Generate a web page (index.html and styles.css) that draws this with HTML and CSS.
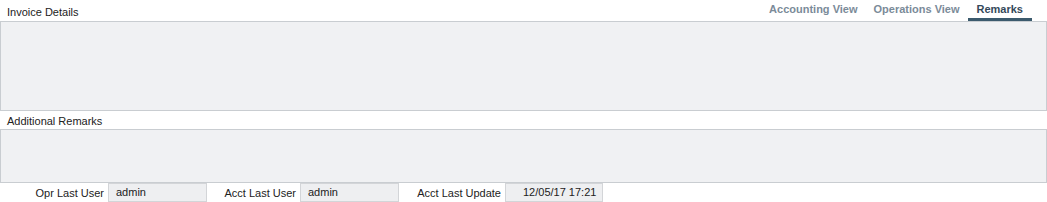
FILE: index.html
```html
<!DOCTYPE html>
<html lang="en">
<head>
    <meta charset="UTF-8">
    <title>Remarks</title>
    <link rel="stylesheet" href="styles.css">
</head>
<body>
    <div class="panel">
        <div class="header">
            <span class="section-label">Invoice Details</span>
            <div class="tabs">
                <span class="tab">Accounting View</span>
                <span class="tab">Operations View</span>
                <span class="tab active">Remarks</span>
            </div>
        </div>
        <div class="box box-details"></div>

        <div class="section-label label-row">Additional Remarks</div>
        <div class="box box-remarks"></div>

        <div class="footer">
            <label class="field-label field-opr">Opr Last User</label>
            <div class="field">admin</div>
            <label class="field-label field-acct">Acct Last User</label>
            <div class="field">admin</div>
            <label class="field-label field-update">Acct Last Update</label>
            <div class="field field-date">12/05/17 17:21</div>
        </div>
    </div>
</body>
</html>
```

FILE: styles.css
```css
body {
    margin: 0;
    font-family: 'Liberation Sans', Arial, sans-serif;
    font-size: 11px;
    color: #222;
    background: #fff;
}

.panel {
    width: 1047px;
}

.header {
    display: flex;
    justify-content: space-between;
    align-items: flex-end;
    height: 21px;
}

.section-label {
    padding-left: 7px;
    line-height: 14px;
    padding-bottom: 2px;
}

.tabs {
    display: flex;
    margin-right: 15px;
    height: 21px;
}

.tab {
    font-weight: bold;
    color: #7b8b99;
    padding: 3px 7px 0 8px;
    margin-left: 1px;
    box-sizing: border-box;
    height: 21px;
    white-space: nowrap;
}

.tab.active {
    color: #34495a;
    border-bottom: 3px solid #3b5a6d;
    padding: 3px 9px 0;
}

.box {
    background: #f0f1f3;
    border: 1px solid #c9cdd1;
    box-sizing: border-box;
}

.box-details {
    height: 90px;
}

.label-row {
    height: 18px;
    box-sizing: border-box;
    padding-top: 3px;
}

.box-remarks {
    height: 54px;
}

.footer {
    display: flex;
    align-items: center;
    height: 19px;
}

.field-label {
    text-align: right;
    padding-right: 4px;
    box-sizing: border-box;
    white-space: nowrap;
}

.field-opr {
    width: 108px;
}

.field-acct {
    width: 93px;
}

.field-update {
    width: 106px;
}

.field {
    width: 99px;
    height: 19px;
    line-height: 17px;
    box-sizing: border-box;
    background: #eeeff1;
    border: 1px solid #d3d5d8;
    padding-left: 7px;
    white-space: nowrap;
}

.field-date {
    width: 98px;
    padding-left: 17px;
}
```
